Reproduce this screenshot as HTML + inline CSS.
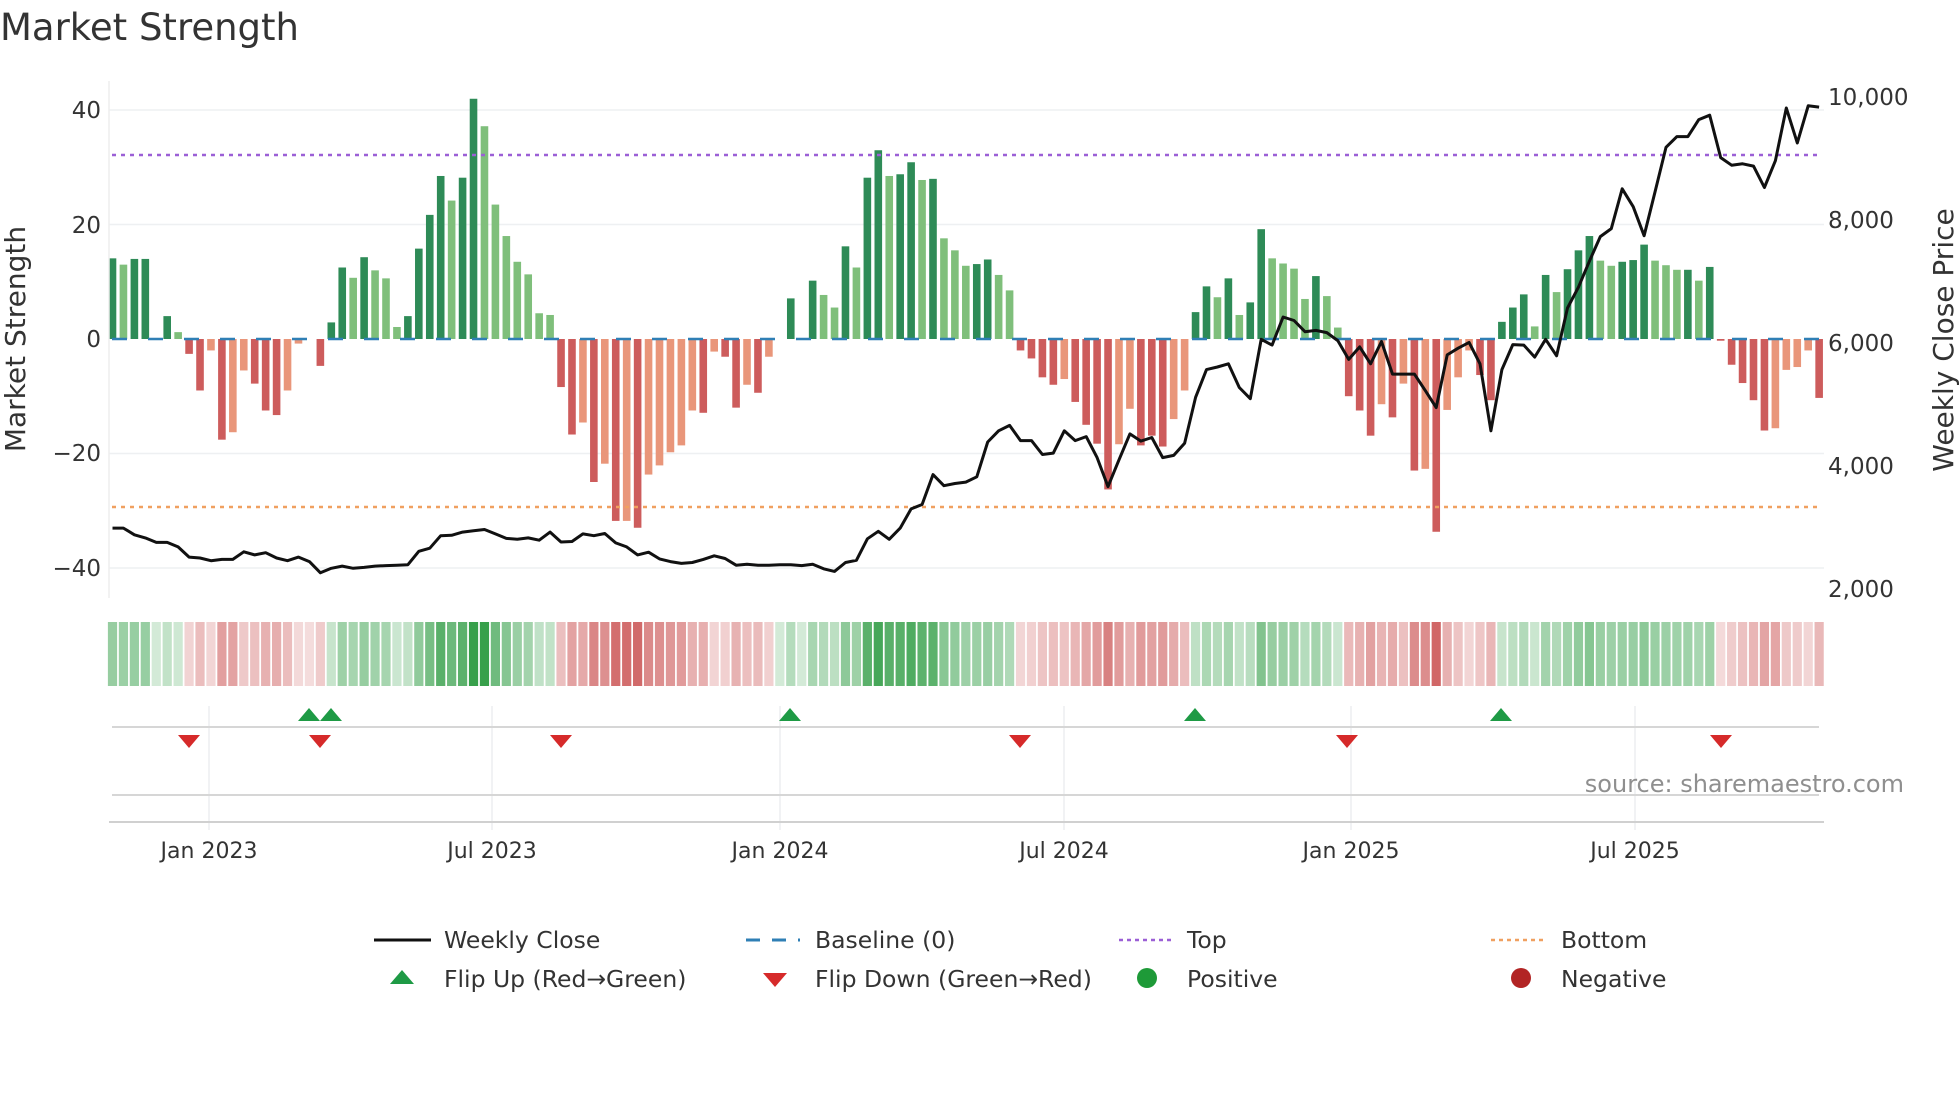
<!DOCTYPE html>
<html><head><meta charset="utf-8"><style>
html,body{margin:0;padding:0;background:#fff;}
svg{display:block;}
text{font-family:"DejaVu Sans","Liberation Sans",sans-serif;fill:#333;}
</style></head><body>
<svg id="s" width="1960" height="1102" viewBox="0 0 1960 1102" xmlns="http://www.w3.org/2000/svg">
<text x="0" y="40" font-size="37" fill="#333">Market Strength</text>
<g id="grid"></g>
<g id="heat"></g>
<g id="bars"></g>
<line x1="109" y1="81" x2="109" y2="598" stroke="#eee" stroke-width="1.5"/>
<line x1="112" y1="155" x2="1821" y2="155" stroke="#9b5fd6" stroke-width="2.5" stroke-dasharray="4 5"/>
<line x1="112" y1="507" x2="1821" y2="507" stroke="#f0a060" stroke-width="2.5" stroke-dasharray="4 5"/>
<line x1="112" y1="339" x2="1821" y2="339" stroke="#2f7fb5" stroke-width="2.5" stroke-dasharray="15 21"/>
<polyline id="price" fill="none" stroke="#111" stroke-width="3" stroke-linejoin="round"/>
<g font-size="23" text-anchor="end">
<text x="101" y="118">40</text><text x="101" y="233">20</text><text x="101" y="347">0</text><text x="101" y="461">−20</text><text x="101" y="576">−40</text>
</g>
<g font-size="23">
<text x="1828" y="105">10,000</text><text x="1828" y="228">8,000</text><text x="1828" y="351">6,000</text><text x="1828" y="474">4,000</text><text x="1828" y="597">2,000</text>
</g>
<text transform="translate(25,339) rotate(-90)" font-size="28" text-anchor="middle">Market Strength</text>
<text transform="translate(1953,340) rotate(-90)" font-size="28" text-anchor="middle">Weekly Close Price</text>
<g id="lower"></g>
<line x1="112" y1="727" x2="1819" y2="727" stroke="#d6d6d6" stroke-width="2"/>
<line x1="112" y1="795" x2="1819" y2="795" stroke="#d6d6d6" stroke-width="2"/>
<line x1="109" y1="822" x2="1824" y2="822" stroke="#d0d0d0" stroke-width="2"/>
<g id="marks"></g>
<text x="1904" y="792" font-size="24" text-anchor="end" style="fill:#8f8f8f">source: sharemaestro.com</text>
<g font-size="22" text-anchor="middle">
<text x="209" y="858">Jan 2023</text><text x="492" y="858">Jul 2023</text><text x="780" y="858">Jan 2024</text><text x="1064" y="858">Jul 2024</text><text x="1351" y="858">Jan 2025</text><text x="1635" y="858">Jul 2025</text>
</g>
<g font-size="23.5">
<line x1="374" y1="940" x2="431" y2="940" stroke="#111" stroke-width="3"/>
<text x="444" y="948">Weekly Close</text>
<line x1="746" y1="940" x2="800" y2="940" stroke="#2f7fb5" stroke-width="3" stroke-dasharray="14 12"/>
<text x="815" y="948">Baseline (0)</text>
<line x1="1119" y1="940" x2="1172" y2="940" stroke="#9b5fd6" stroke-width="2.5" stroke-dasharray="4 4"/>
<text x="1187" y="948">Top</text>
<line x1="1491" y1="940" x2="1546" y2="940" stroke="#f0a060" stroke-width="2.5" stroke-dasharray="4 4"/>
<text x="1561" y="948">Bottom</text>
<polygon points="402,970 414,984 390,984" fill="#1e9a45"/>
<text x="444" y="987">Flip Up (Red→Green)</text>
<polygon points="763,973 787,973 775,987" fill="#d62a2a"/>
<text x="815" y="987">Flip Down (Green→Red)</text>
<circle cx="1147" cy="978" r="10" fill="#1e9a38"/>
<text x="1187" y="987">Positive</text>
<circle cx="1521" cy="978" r="10" fill="#b22424"/>
<text x="1561" y="987">Negative</text>
</g>
</svg>
<script>
var NS="http://www.w3.org/2000/svg";
function el(t,a,p){var e=document.createElementNS(NS,t);for(var k in a)e.setAttribute(k,a[k]);document.getElementById(p).appendChild(e);return e;}
var V="14.1d 13l 14d 14d 0d 4d 1.2l -2.6r -9r -2o -17.6r -16.3o -5.5o -7.8r -12.5r -13.3r -9o -0.8o 0r -4.7r 2.9d 12.5d 10.7l 14.3d 12l 10.6l 2.1l 4d 15.8d 21.7d 28.5d 24.2l 28.2d 42d 37.2l 23.5l 18l 13.5l 11.3l 4.5l 4.2l -8.4r -16.7r -14.6o -25r -21.8o -31.8r -31.8o -33r -23.7o -22.1o -19.8o -18.6o -12.5o -12.9r -2.2o -3.1r -12r -8o -9.4r -3.1o 0d 7.1d 0d 10.2d 7.7l 5.5l 16.2d 12.5l 28.2d 33d 28.5l 28.8d 30.9d 27.8l 28d 17.6l 15.5l 12.8l 13.1d "+
"13.9d 11.2l 8.5l -2r -3.4r -6.7r -8r -7o -11r -15r -18.3r -26.3r -18.4o -12.2o -18.6r -16.9r -18.8r -14o -9o "+
"4.7d 9.2d 7.3l 10.6d 4.2l 6.4d 19.2d 14.1l 13.2l 12.3l 7l 11d 7.5l 2l "+
"-10r -12.5r -16.9r -11.4o -13.7r -7.8o -23r -22.7o -33.7r -12.4o -6.7o -2o -6.3r -10.7r "+
"3d 5.5d 7.8d 2.2l 11.2d 8.2l 12.2d 15.5d 18d 13.7l 12.8l 13.5d 13.8d 16.5d 13.7l 12.9l 12.1l 12.1d 10.2l 12.6d "+
"-0.3r -4.5r -7.7r -10.7r -16r -15.6o -5.4o -4.9o -2o -10.3r";
var arr=V.trim().split(/\s+/);
var col={d:"#2e8b57",l:"#7fbf7b",r:"#cd5c5c",o:"#e9967a"};
var X0=112.5,DX=10.94,Z=339,U=5.72;
[110,224.5,453.5,568].forEach(function(y){el("line",{x1:109,y1:y,x2:1824,y2:y,stroke:"#eef0f2","stroke-width":1.5},"grid");});
for(var i=0;i<arr.length;i++){
 var v=parseFloat(arr[i]),c=arr[i].slice(-1),x=X0+i*DX;
 if(v!==0){var h=Math.abs(v)*U;el("rect",{x:x-3.8,y:v>0?Z-h:Z,width:7.6,height:h,fill:col[c]},"bars");}
 var a=Math.min(1,0.22+Math.abs(v)/40*0.85);
 var fill=(c=="d"||c=="l")?"rgba(55,160,75,"+a+")":"rgba(200,75,75,"+(a*0.9)+")";
 el("rect",{x:x-4.6,y:622,width:9.2,height:64,fill:fill},"heat");
}
var L1=[1183,1183,1198,1205,1215,1215,1225,1248,1250,1256,1253,1253,1236,1243,1238,1250,1256,1248,1258,1283,1273,1268,1273,1271,1268,1267,1266,1265,1235,1228,1200,1199,1192,1189,1186,1196,1206,1208,1205,1210,1192,1214,1213,1196,1200,1195,1216,1225,1243,1237,1252,1258,1262,1260,1253,1245,1251,1266,1264,1266,1266,1265,1265,1267,1264,1274,1280,1260,1255,1207,1190,1208,1183,1140,1130,1063,1088,1083,1080,1068];
var L2=[990,965,953,987,987,1018,1015,965,987,978,1025,1090,1030,972,988,980,1025,1020,993,890,828,822,815,868,893,760,773,710,718,743,740,745,763,805,777,815,765,838,838,838,875,913,795,780,767,815,965,828,772,773,800,760,797,690,643,585,530,512,423,463,528,430,330,306,306,268,258,353,370,367,372,420,360,242,320,237,240];
var L=L1.concat(L2),pts=[];
for(var j=0;j<L.length;j++){pts.push((X0+j*DX).toFixed(1)+","+(L[j]/2.24).toFixed(1));}
document.getElementById("price").setAttribute("points",pts.join(" "));
[209,492,780,1064,1351,1635].forEach(function(x){el("line",{x1:x,y1:706,x2:x,y2:830,stroke:"#eceef0","stroke-width":1.5},"lower");});
[309,331,790,1195,1501].forEach(function(x){el("polygon",{points:(x)+",708 "+(x+11)+",721 "+(x-11)+",721",fill:"#1e9a45"},"marks");});
[189,320,561,1020,1347,1721].forEach(function(x){el("polygon",{points:(x-11)+",735 "+(x+11)+",735 "+x+",748",fill:"#d62a2a"},"marks");});
</script>
</body></html>
